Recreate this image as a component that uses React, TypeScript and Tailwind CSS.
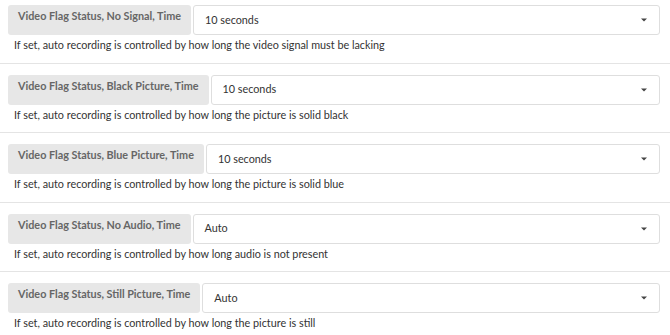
import React from "react";

const ROWS = [
  {
    label: "Video Flag Status, No Signal, Time",
    value: "10 seconds",
    help: "If set, auto recording is controlled by how long the video signal must be lacking",
  },
  {
    label: "Video Flag Status, Black Picture, Time",
    value: "10 seconds",
    help: "If set, auto recording is controlled by how long the picture is solid black",
  },
  {
    label: "Video Flag Status, Blue Picture, Time",
    value: "10 seconds",
    help: "If set, auto recording is controlled by how long the picture is solid blue",
  },
  {
    label: "Video Flag Status, No Audio, Time",
    value: "Auto",
    help: "If set, auto recording is controlled by how long audio is not present",
  },
  {
    label: "Video Flag Status, Still Picture, Time",
    value: "Auto",
    help: "If set, auto recording is controlled by how long the picture is still",
  },
];

function Caret() {
  return (
    <svg width="6" height="4" viewBox="0 0 6 4" className="shrink-0">
      <path d="M0 0.5h6L3 3.5z" fill="#444" />
    </svg>
  );
}

export default function App() {
  return (
    <div className="h-[335px] w-[670px] overflow-hidden bg-white font-['Lato',sans-serif]">
      {ROWS.map((row, i) => (
        <div
          key={row.label}
          className={
            i === 0
              ? "pb-[10.5px] pt-[5px]"
              : "border-t border-[#e4e4e4] pb-[10.5px] pt-[11px]"
          }
        >
          <div className="flex gap-[2px] pl-2 pr-[10px]">
            <div className="h-[30px] whitespace-nowrap rounded-[3px] bg-[#e7e7e7] px-[10px] pt-[4px] text-[10.8px] font-bold leading-[14px] text-[#666]">
              {row.label}
            </div>
            <div className="flex h-[30px] flex-1 items-center justify-between rounded-[3px] border border-[#dedede] pl-[11px] pr-[12px] text-[10.8px] text-[#333]">
              <span>{row.value}</span>
              <Caret />
            </div>
          </div>
          <p className="mt-[3px] pl-[14px] text-[10.8px] leading-[14px] text-[#333]">
            {row.help}
          </p>
        </div>
      ))}
    </div>
  );
}
